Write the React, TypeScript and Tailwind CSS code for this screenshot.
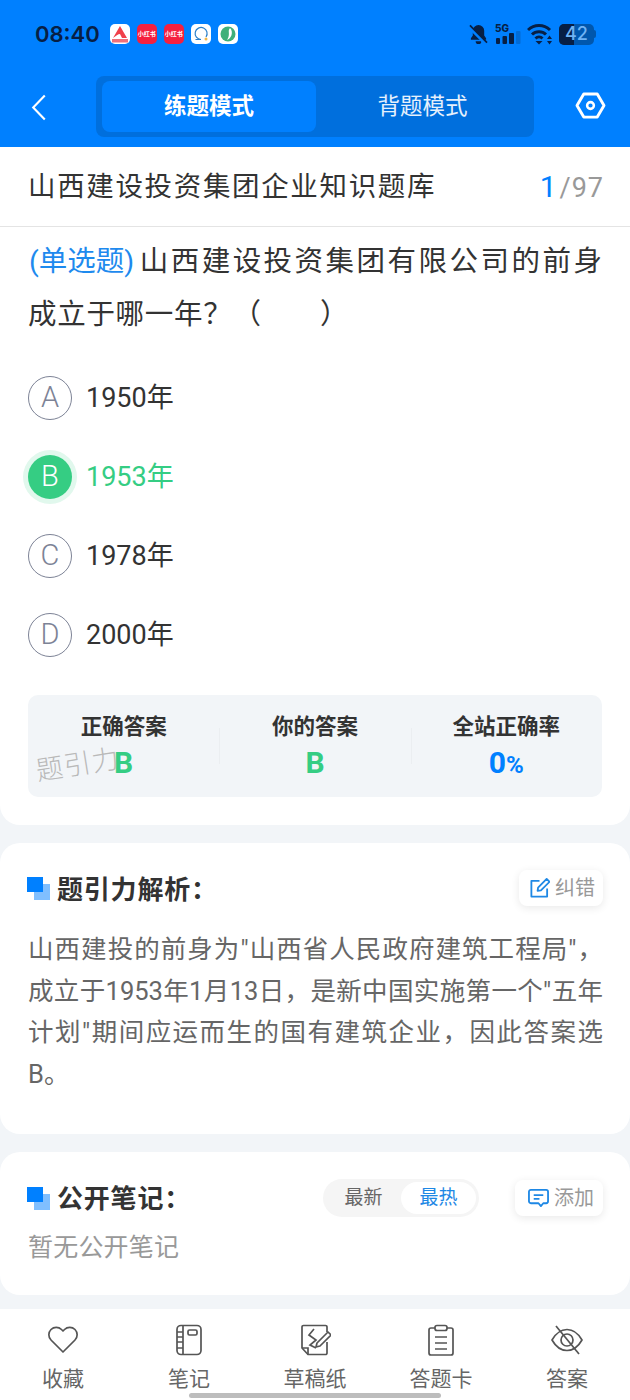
import React from 'react';

const cjk = "font-['Roboto','Noto_Sans_CJK_SC',sans-serif]";

const options = [
  { key: 'A', text: '1950年' },
  { key: 'B', text: '1953年', picked: true },
  { key: 'C', text: '1978年' },
  { key: 'D', text: '2000年' },
];

const SectionMark = () => (
  <div className="relative w-[23px] h-[23px] shrink-0 -ml-px">
    <div className="absolute right-0 bottom-0 w-[16px] h-[16px] bg-[#80bfff]" />
    <div className="absolute left-0 top-0 w-[16px] h-[15px] bg-[#0080ff]" />
  </div>
);

const AppIcon = ({ bg, children }: { bg: string; children: React.ReactNode }) => (
  <div className={`w-5 h-5 rounded-[5px] flex items-center justify-center overflow-hidden ${bg}`}>{children}</div>
);

const StatusBar = () => (
  <div className="h-[68px] flex items-center pl-[35px] pr-[34px]">
    <span className="text-[22px] leading-none font-semibold text-[#071f45] font-['Inter',sans-serif]">08:40</span>
    <div className="flex gap-[7px] ml-[10px]">
      <AppIcon bg="bg-white">
        <svg viewBox="0 0 20 20" className="w-5 h-5">
          <path d="M10 2L3 14c3-2 5-4 7-4l2 4h5z" fill="#f0404a" />
          <rect x="2" y="15" width="16" height="3.500" fill="#f0707a" />
        </svg>
      </AppIcon>
      <AppIcon bg="bg-[#f5203f]">
        <span className="text-[6px] font-bold text-white leading-none whitespace-nowrap">小红书</span>
      </AppIcon>
      <AppIcon bg="bg-[#f5203f]">
        <span className="text-[6px] font-bold text-white leading-none whitespace-nowrap">小红书</span>
      </AppIcon>
      <AppIcon bg="bg-white">
        <svg viewBox="0 0 20 20" className="w-5 h-5" fill="none">
          <path d="M15 13a6 6 0 1 0-5 2.500H4.500" stroke="#2a7fc9" strokeWidth="1.200" />
          <circle cx="15" cy="15" r="1.500" fill="#f2b84b" />
        </svg>
      </AppIcon>
      <AppIcon bg="bg-white">
        <svg viewBox="0 0 20 20" className="w-5 h-5">
          <circle cx="10" cy="10" r="7.500" fill="#3fb07a" />
          <path d="M12 4c-3 3 1 6-3 12 4-1 7-8 3-12z" fill="#fff" />
        </svg>
      </AppIcon>
    </div>
    <div className="ml-auto flex items-center">
      <svg viewBox="0 0 20 22" className="w-[19px] h-[21px]">
        <path d="M10 1a6 6 0 0 0-6 6v5l-2 3v1.500h16V15l-2-3V7a6 6 0 0 0-6-6zM7 18a3 3 0 0 0 6 0z" fill="#071f45" />
        <path d="M0 3l18 18" stroke="#007fff" strokeWidth="3.500" />
        <path d="M1 1.500l18 18" stroke="#071f45" strokeWidth="1.800" />
      </svg>
      <svg viewBox="0 0 26 22" className="w-[26px] h-[22px] ml-[7px]">
        <text x="0" y="8.500" fontSize="10" fontWeight="800" fill="#071f45" fontFamily="Inter">5G</text>
        <rect x="1" y="15" width="4" height="6" rx="1" fill="#071f45" />
        <rect x="7.500" y="13" width="4.500" height="8" rx="1" fill="#071f45" />
        <rect x="14" y="10" width="5" height="11" rx="1" fill="#071f45" />
        <rect x="21" y="8" width="4.500" height="13" rx="1" fill="#071f45" fillOpacity="0.22" />
      </svg>
      <svg viewBox="0 0 26 22" className="w-[26px] h-[22px] ml-[6px]">
        <path d="M1 7a16 16 0 0 1 22 0M5 11.500a10 10 0 0 1 14 0M8.500 15.500a5 5 0 0 1 7 0" fill="none" stroke="#071f45" strokeWidth="3" />
        <path d="M12 21.500l-3.500-3.500h7z" fill="#071f45" />
        <path d="M22.500 12.500l-2.500 3.500h5zM22.500 21.500l-2.500-3.500h5z" fill="#071f45" />
      </svg>
      <div className="relative ml-[6px] w-[35px] h-[21px] rounded-[5px] bg-[#0057ad] overflow-hidden flex items-center justify-center">
        <div className="absolute left-0 top-0 bottom-0 w-[15px] bg-[#071f45]" />
        <span className="relative text-[18px] leading-none font-medium text-[#6fb3f5] font-['Inter',sans-serif]">42</span>
      </div>
      <div className="w-[2px] h-[8px] bg-[#0057ad] rounded-r-sm" />
    </div>
  </div>
);

const Header = () => (
  <div className="bg-[#0080ff] h-[147px]">
    <StatusBar />
    <div className="relative h-[61px] mt-2 flex items-center">
      <svg viewBox="0 0 16 28" className="absolute left-[31px] top-[18px] w-4 h-[27px]" fill="none" stroke="#fff" strokeWidth="2.200">
        <path d="M14 1.500L2 14l12 12.500" />
      </svg>
      <div className="ml-[96px] w-[438px] h-[61px] rounded-[8px] bg-[#006fdd] p-[5px] flex">
        <div className="w-[214px] ml-px h-[51px] rounded-[8px] bg-[#0080ff] flex items-center justify-center text-white text-[22.5px] font-bold">
          练题模式
        </div>
        <div className="flex-1 flex items-center justify-center text-white/90 text-[22.5px] font-normal">背题模式</div>
      </div>
      <svg viewBox="0 0 32 28" className="absolute left-[575px] top-[16px] w-[31px] h-[27px]" fill="none" stroke="#fff" strokeWidth="3">
        <path d="M9 2h14l7 12-7 12H9L2 14z" strokeLinejoin="round" />
        <circle cx="16" cy="14" r="3.500" strokeWidth="2.600" />
      </svg>
    </div>
  </div>
);

const QuestionCard = () => (
  <div className="bg-white rounded-b-[20px] h-[678px]">
    <div className="h-[80px] border-b border-[#e4e4e4] pl-[29px] pr-[26px] flex items-center justify-between">
      <span className="text-[#333] text-[27.5px] tracking-[1.650px] leading-none -ml-px">山西建设投资集团企业知识题库</span>
      <span className="flex items-baseline leading-none font-['Roboto',sans-serif]">
        <span className="text-[#0080ff] text-[30px]">1</span>
        <span className="text-[#999] text-[27px] ml-[3px] tracking-[1px]">/97</span>
      </span>
    </div>
    <div className="px-[28px] pt-[8px]">
      <div className="text-[#333] text-[28.5px] leading-[53px]">
        <p className="[text-align-last:justify]">
          <span className="inline-block text-[#1e8aee] mr-[3px] ml-px">(单选题)</span>山西建设投资集团有限公司的前身
        </p>
        <p className="tracking-[0.7px]">成立于哪一年？（　　）</p>
      </div>
      <div className="mt-[35px] flex flex-col gap-[35px]">
        {options.map(o => (
          <div key={o.key} className="flex items-center h-[44px]">
            {o.picked ? (
              <div className="w-[44px] h-[44px] rounded-full bg-[#35cd83] ring-[5px] ring-[#e1f8ed] flex items-center justify-center text-white text-[29px] font-['Roboto',sans-serif] font-light">
                {o.key}
              </div>
            ) : (
              <div className="w-[44px] h-[44px] rounded-full border border-[#7d8396] flex items-center justify-center text-[#7d8396] text-[29px] font-['Roboto',sans-serif] font-light">
                {o.key}
              </div>
            )}
            <span className={`ml-[14px] text-[27px] leading-none ${o.picked ? 'text-[#35cd83]' : 'text-[#333]'}`}>{o.text}</span>
          </div>
        ))}
      </div>
      <div className="relative mt-[38px] h-[102px] rounded-[10px] bg-[#f2f5f8] grid grid-cols-3">
        {[
          { label: '正确答案', value: 'B', color: 'text-[#35cd83]' },
          { label: '你的答案', value: 'B', color: 'text-[#35cd83]' },
          { label: '全站正确率', value: '0', color: 'text-[#0080ff]', suffix: '%' },
        ].map((s, i) => (
          <div key={s.label} className="relative flex flex-col items-center pt-[18px]">
            {i > 0 && <div className="absolute left-0 top-[33px] h-[36px] w-px bg-[#ebeef1]" />}
            <span className="text-[#333] text-[21.500px] font-bold leading-[28px]">{s.label}</span>
            <span className={`mt-[6px] text-[30px] font-bold leading-[32px] font-['Roboto',sans-serif] ${s.color}`}>
              {s.value}
              {s.suffix && <span className="text-[24px]">{s.suffix}</span>}
            </span>
          </div>
        ))}
        <span className="absolute left-[8px] top-[57px] -rotate-[9deg] text-[#b9b9b9] text-[27px] font-light tracking-[1px] leading-none whitespace-nowrap">
          题引力
        </span>
      </div>
    </div>
  </div>
);

const SmallAction = ({ icon, label, className }: { icon: React.ReactNode; label: string; className: string }) => (
  <div className={`flex items-center justify-center rounded-[8px] bg-white shadow-[0_2px_8px_rgba(0,0,0,0.09)] ${className}`}>
    {icon}
    <span className="ml-[5px] text-[#999] text-[20px] leading-none">{label}</span>
  </div>
);

const AnalysisCard = () => (
  <div className="mt-[18px] bg-white rounded-[20px] h-[291px] pl-[28px] pr-[27px] pt-[26px]">
    <div className="flex items-center justify-between h-[38px]">
      <div className="flex items-center">
        <SectionMark />
        <span className="ml-[7px] pt-[3px] text-[#333] text-[26px] font-bold tracking-[0.8px] leading-none">题引力解析：</span>
      </div>
      <SmallAction
        className="w-[84px] h-[36px] pl-[2px]"
        label="纠错"
        icon={
          <svg viewBox="0 0 22 22" className="w-[21px] h-[21px]" fill="none" stroke="#1e88e5" strokeWidth="1.900">
            <path d="M11 3H2.500v16.500H19V11" strokeLinejoin="round" />
            <path d="M9 13.500l.5-3.500 9-9 3 3-9 9z" strokeLinejoin="round" />
          </svg>
        }
      />
    </div>
    <p className="mt-[22px] text-[#666] text-[25.500px] leading-[41.500px] text-justify">
      山西建投的前身为"山西省人民政府建筑工程局"，成立于1953年1月13日，是新中国实施第一个"五年计划"期间应运而生的国有建筑企业，因此答案选B。
    </p>
  </div>
);

const NotesCard = () => (
  <div className="mt-[18px] bg-white rounded-[20px] h-[143px] pl-[28px] pr-[27px] pt-[27px]">
    <div className="flex items-center h-[38px]">
      <SectionMark />
      <span className="ml-[7px] pt-[2px] text-[#333] text-[26px] font-bold tracking-[0.8px] leading-none">公开笔记：</span>
      <div className="ml-auto flex h-[38px] w-[156px] rounded-full bg-[#f5f5f5] p-[3px]">
        <div className="w-[75px] flex items-center justify-center text-[#666] text-[19px]">最新</div>
        <div className="flex-1 flex items-center justify-center rounded-full bg-white text-[#1e88e5] text-[19px]">最热</div>
      </div>
      <SmallAction
        className="ml-[36px] w-[88px] h-[36px] pl-[4px]"
        label="添加"
        icon={
          <svg viewBox="0 0 22 20" className="w-[21px] h-[20px]" fill="none" stroke="#1e88e5" strokeWidth="1.900">
            <path d="M3 1.500h16a2 2 0 0 1 2 2v10a2 2 0 0 1-2 2h-3l-2.500 3-2.500-3H3a2 2 0 0 1-2-2v-10a2 2 0 0 1 2-2z" strokeLinejoin="round" />
            <path d="M6 7h10M6 11h6" />
          </svg>
        }
      />
    </div>
    <p className="mt-[13px] text-[#999] text-[25px] tracking-[0.2px] leading-[36px]">暂无公开笔记</p>
  </div>
);

const navItems: { label: string; icon: React.ReactNode }[] = [
  {
    label: '收藏',
    icon: <path d="M16 28L4 16a7.500 7.500 0 0 1 0-10.500 7.500 7.500 0 0 1 10.500 0L16 7l1.500-1.500a7.500 7.500 0 0 1 10.500 0 7.500 7.500 0 0 1 0 10.500z" strokeLinejoin="round" />,
  },
  {
    label: '笔记',
    icon: (
      <>
        <rect x="4" y="1.500" width="24" height="29" rx="4" />
        <path d="M10 1.500v29M4 8h6M4 13h6M4 18h6M4 24h6" />
        <rect x="15" y="6" width="9" height="5" rx="1.500" />
      </>
    ),
  },
  {
    label: '草稿纸',
    icon: (
      <>
        <path d="M28 8V3a1.500 1.500 0 0 0-1.500-1.500h-22A1.500 1.500 0 0 0 3 3v21l6 6.500h17.500A1.500 1.500 0 0 0 28 29V18" strokeLinejoin="round" />
        <path d="M3 24h6v6.500M15 5l-5 6 7 5-6 5 6 3" />
        <path d="M17 23l1-4 11-11 3 3-11 11z" strokeLinejoin="round" />
      </>
    ),
  },
  {
    label: '答题卡',
    icon: (
      <>
        <path d="M10 4H6a2 2 0 0 0-2 2v23a2 2 0 0 0 2 2h20a2 2 0 0 0 2-2V6a2 2 0 0 0-2-2h-4" />
        <rect x="10" y="1.500" width="12" height="5" rx="2" />
        <path d="M10 13h12M10 19h12M10 25h12" />
      </>
    ),
  },
  {
    label: '答案',
    icon: (
      <>
        <path d="M1 16c4-7 9-10.500 15-10.500S27 9 31 16c-4 7-9 10.500-15 10.500S5 23 1 16z" strokeLinejoin="round" />
        <circle cx="16" cy="16" r="6" />
        <path d="M5 2l23 28" />
      </>
    ),
  },
];

const BottomNav = () => (
  <div className="mt-[14px] relative bg-white h-[91px] grid grid-cols-5">
    {navItems.map(item => (
      <div key={item.label} className="flex flex-col items-center pt-[15px]">
        <svg viewBox="0 0 32 32" className="w-[32px] h-[32px]" fill="none" stroke="#555" strokeWidth="1.700">
          {item.icon}
        </svg>
        <span className="mt-[8px] text-[#666] text-[21px] leading-[30px]">{item.label}</span>
      </div>
    ))}
    <div className="absolute left-[189px] top-[84px] w-[252px] h-[5px] rounded-full bg-[#bdbdbd]" />
  </div>
);

export default function App() {
  return (
    <div className={`w-[630px] h-[1400px] overflow-hidden bg-[#f2f5f8] ${cjk}`}>
      <Header />
      <QuestionCard />
      <AnalysisCard />
      <NotesCard />
      <BottomNav />
    </div>
  );
}
